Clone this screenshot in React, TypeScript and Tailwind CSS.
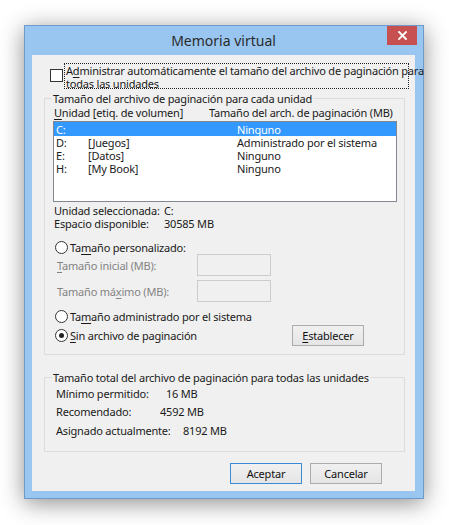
import React from "react";

const U = ({ children }: { children: React.ReactNode }) => (
  <span className="underline underline-offset-[2px] decoration-1">{children}</span>
);

const Radio = ({ checked }: { checked?: boolean }) => (
  <span className="flex items-center justify-center w-[13px] h-[13px] rounded-full border border-[#333] bg-white shrink-0">
    {checked && <span className="block w-[5px] h-[5px] rounded-full bg-[#222]" />}
  </span>
);

const Btn = ({ children, def }: { children: React.ReactNode; def?: boolean }) => (
  <div
    className={`flex items-center justify-center w-[72px] h-[21px] border bg-gradient-to-b from-[#f0f0f0] to-[#e5e5e5] text-[#111] ${
      def ? "border-[#3c8ad6]" : "border-[#acacac]"
    }`}
  >
    {children}
  </div>
);

export default function App() {
  const rows = [
    { d: "C:", l: "", s: "Ninguno", sel: true },
    { d: "D:", l: "[Juegos]", s: "Administrado por el sistema" },
    { d: "E:", l: "[Datos]", s: "Ninguno" },
    { d: "H:", l: "[My Book]", s: "Ninguno" },
  ];
  return (
    <div className="w-[449px] h-[525px] bg-white overflow-hidden font-['Noto_Sans',sans-serif] text-[11px] tracking-[-0.2px] leading-[13px] text-[#1a1a1a]">
      <div className="pt-[25px] pl-[24px]">
        <div className="w-[400px] h-[474px] border border-[#6f99c9] bg-[#99c6f0] pl-[7px] pr-[8px] shadow-[0_4px_22px_rgba(0,0,0,0.45)] flex flex-col">
          {/* title bar */}
          <div className="h-[29px] grid grid-cols-[1fr_auto_1fr] items-center">
            <div />
            <div className="text-[14px] tracking-normal leading-[18px] text-[#2b2b2b] whitespace-nowrap pt-[1px]">
              Memoria virtual
            </div>
            <div className="self-start justify-self-end mr-[-2px] w-[30px] h-[19px] bg-[#c75050] flex items-center justify-center">
              <svg width="9" height="9" viewBox="0 0 9 9">
                <path d="M1 1 L8 8 M8 1 L1 8" stroke="white" strokeWidth="1.8" strokeLinecap="square" />
              </svg>
            </div>
          </div>
          {/* content */}
          <div className="w-[383px] h-[436px] bg-[#f0f0f0] flex flex-col whitespace-nowrap">
            {/* checkbox */}
            <div className="mt-[8px] flex items-start">
              <span className="ml-[18px] mt-[6px] w-[13px] h-[13px] border border-[#333] bg-white shrink-0" />
              <div className="ml-[1px] w-[345px] h-[26px] border border-dotted border-[#222] pl-[1px]">
                <div>
                  A<U>d</U>ministrar automáticamente el tamaño del archivo de paginación para
                </div>
                <div>todas las unidades</div>
              </div>
            </div>

            {/* group 1 */}
            <fieldset className="mt-[3px] ml-[12px] w-[361px] min-w-0 border border-[#dcdcdc] pb-[8px]">
              <legend className="ml-[7px] px-[1px] leading-[13px]">
                Tamaño del archivo de paginación para cada unidad
              </legend>
              <div className="mt-[1px] pl-[9px] flex">
                <div className="w-[155px]">
                  <U>U</U>nidad [etiq. de volumen]
                </div>
                <div>Tamaño del arch. de paginación (MB)</div>
              </div>
              <div className="mt-[2px] ml-[8px] w-[344px] h-[81px] border border-[#828790] bg-white">
                {rows.map((r, i) => (
                  <div
                    key={r.d}
                    className={`grid grid-cols-[32px_149px_1fr] items-center pl-[2px] ${
                      i === 0 ? "h-[14px]" : "h-[13px]"
                    } ${r.sel ? "bg-[#3399ff] text-white" : ""}`}
                  >
                    <span>{r.d}</span>
                    <span>{r.l}</span>
                    <span>{r.s}</span>
                  </div>
                ))}
              </div>
              <div className="mt-[2px] pl-[9px] flex">
                <div className="w-[110px]">Unidad seleccionada:</div>
                <div>C:</div>
              </div>
              <div className="pl-[9px] flex">
                <div className="w-[110px]">Espacio disponible:</div>
                <div>30585 MB</div>
              </div>
              <div className="mt-[11px] pl-[10px] h-[13px] flex items-center">
                <Radio />
                <span className="ml-[2px]">
                  Ta<U>m</U>año personalizado:
                </span>
              </div>
              <div className="pl-[12px] flex items-center text-[#838383]">
                <div className="w-[140px]">
                  <U>T</U>amaño inicial (MB):
                </div>
                <div className="w-[74px] h-[22px] border border-[#cccccc] bg-[#f0f0f0]" />
              </div>
              <div className="mt-[4px] pl-[12px] flex items-center text-[#838383]">
                <div className="w-[140px]">
                  Tamaño má<U>x</U>imo (MB):
                </div>
                <div className="w-[74px] h-[22px] border border-[#cccccc] bg-[#f0f0f0]" />
              </div>
              <div className="mt-[8px] pl-[10px] h-[13px] flex items-center">
                <Radio />
                <span className="ml-[2px]">
                  Ta<U>m</U>año administrado por el sistema
                </span>
              </div>
              <div className="mt-[2px] pl-[10px] h-[21px] flex items-center">
                <Radio checked />
                <span className="ml-[2px]">
                  <U>S</U>in archivo de paginación
                </span>
                <div className="ml-auto mr-[40px]">
                  <Btn>
                    <span>
                      <U>E</U>stablecer
                    </span>
                  </Btn>
                </div>
              </div>
            </fieldset>

            {/* group 2 */}
            <fieldset className="mt-[16px] ml-[12px] w-[361px] min-w-0 border border-[#dcdcdc] pb-[14px]">
              <legend className="ml-[7px] px-[1px] leading-[13px]">
                Tamaño total del archivo de paginación para todas las unidades
              </legend>
              <div className="mt-[3px] pl-[11px] flex">
                <div className="w-[110px]">Mínimo permitido:</div>
                <div>16 MB</div>
              </div>
              <div className="mt-[5px] pl-[11px] flex">
                <div className="w-[104px]">Recomendado:</div>
                <div>4592 MB</div>
              </div>
              <div className="mt-[6px] pl-[11px] flex">
                <div className="w-[127px]">Asignado actualmente:</div>
                <div>8192 MB</div>
              </div>
            </fieldset>

            {/* buttons */}
            <div className="mt-[11px] pr-[33px] flex justify-end gap-[8px]">
              <Btn def>Aceptar</Btn>
              <Btn>Cancelar</Btn>
            </div>
          </div>
        </div>
      </div>
    </div>
  );
}
